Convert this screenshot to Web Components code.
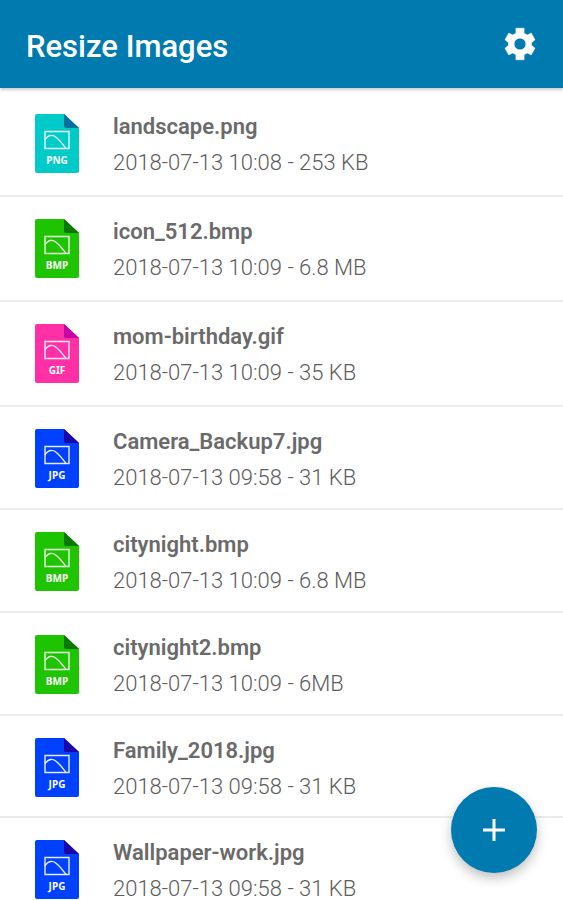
<!DOCTYPE html>
<html lang="en">
<head>
<meta charset="utf-8">
<meta name="viewport" content="width=device-width, initial-scale=1">
<title>Resize Images</title>
<style>
  html { background: #fff; scrollbar-width: none; }
  body { margin: 0; font-family: Roboto, "Liberation Sans", sans-serif; color: #666; }
</style>
</head>
<body>
<resize-app></resize-app>
<script>
const define = (name, render) => customElements.define(name, class extends HTMLElement {
  connectedCallback() {
    if (!this.shadowRoot) this.attachShadow({ mode: "open" }).innerHTML = render(this);
  }
});

define("app-bar", () => `
  <style>
    :host { display: block; position: sticky; top: 0; z-index: 1; background: #007aaf; color: #fff;
            box-shadow: 0 2px 3px rgba(0, 0, 0, .2); }
    header { display: flex; align-items: center; justify-content: space-between; min-height: 88px; padding: 0 24px 0 26px; }
    h1 { margin: 0; padding-top: 6px; font-size: 31px; line-height: 36px; font-weight: 500; }
  </style>
  <header><h1><slot></slot></h1><slot name="action"></slot></header>`);

define("settings-button", () => `
  <style>
    :host { display: block; }
    button { display: block; padding: 0; border: 0; background: none; color: inherit; cursor: pointer; }
    svg { display: block; width: 38px; height: 38px; fill: currentColor; stroke: currentColor; stroke-width: .3; }
  </style>
  <button type="button" aria-label="Settings">
    <svg viewBox="0 0 24 24" aria-hidden="true"><path d="M9.4 2H14.600V5.200L16.600 6.300L19.100 5.100L21.500 9.300L19.300 11.200V12.800L21.500 14.700L19.100 18.900L16.600 17.700L14.600 18.800V22H9.400V18.800L7.400 17.700L4.900 18.900L2.500 14.700L4.700 12.800V11.200L2.500 9.300L4.900 5.100L7.400 6.300L9.400 5.200ZM12 15.700C9.950 15.700 8.300 14.050 8.300 12S9.950 8.300 12 8.300S15.700 9.950 15.700 12S14.050 15.700 12 15.700Z" fill-rule="evenodd" stroke-linejoin="round"/></svg>
  </button>`);

define("file-icon", el => `
  <style>
    :host { display: block; --page: #0040ff; --fold: #1c08a8; }
    :host([type="PNG"]) { --page: #00cbc8; --fold: #00709f; }
    :host([type="BMP"]) { --page: #1fc400; --fold: #087800; }
    :host([type="GIF"]) { --page: #ff2fa6; --fold: #c500a5; }
    svg { display: block; width: 44px; height: 59px; }
    text { font: 700 10px "Noto Sans", sans-serif; fill: #fff; text-anchor: middle; }
  </style>
  <svg viewBox="0 0 44 59">
    <path d="M2 0H29L44 14V57Q44 59 42 59H2Q0 59 0 57V2Q0 0 2 0Z" fill="var(--page)"/>
    <path d="M29 0L44 14H31Q29 14 29 12Z" fill="var(--fold)"/>
    <g fill="none" stroke="#fff" stroke-opacity=".9" stroke-width="1.4">
      <path d="M10 17.5H34V34.500H10Z"/>
      <path d="M10 26C13 20.500 18 20 22 24C26 27.500 28 30.500 31 34.500"/>
    </g>
    <text x="22" y="50">${el.getAttribute("type")}</text>
  </svg>`);

define("file-row", el => `
  <style>
    :host { display: block; border-bottom: 2px solid #ececec; }
    article { display: flex; align-items: flex-start; gap: 34px; padding: 17px 24px 14px 35px; }
    :host([density="dense"]) article { padding-bottom: 12px; }
    :host([density="compact"]) article { padding-bottom: 11px; }
    file-icon { flex: none; padding-top: 5px; }
    div { flex: 1; min-width: 0; }
    h2, p { margin: 0; font-size: 22px; line-height: 36px; overflow-wrap: anywhere; }
    h2 { font-weight: 600; color: #6a6a6a; }
    p { font-weight: 300; color: #5c5c5c; }
  </style>
  <article>
    <file-icon type="${el.getAttribute("type")}"></file-icon>
    <div><h2><slot></slot></h2><p><slot name="info"></slot></p></div>
  </article>`);

define("add-button", () => `
  <style>
    :host { position: fixed; right: 26px; bottom: 27px; z-index: 2; }
    button { display: grid; place-items: center; width: 86px; height: 86px; padding: 0; border: 0; border-radius: 50%;
             background: #007aaf; color: #fff; box-shadow: 0 5px 12px rgba(0, 0, 0, .25); cursor: pointer; }
    svg { width: 22px; height: 22px; stroke: currentColor; stroke-width: 3; }
  </style>
  <button type="button" aria-label="Add images">
    <svg viewBox="0 0 22 22" aria-hidden="true"><path d="M11 0V22M0 11H22"/></svg>
  </button>`);

const files = [
  ["PNG", "landscape.png", "2018-07-13 10:08 - 253 KB"],
  ["BMP", "icon_512.bmp", "2018-07-13 10:09 - 6.8 MB"],
  ["GIF", "mom-birthday.gif", "2018-07-13 10:09 - 35 KB"],
  ["JPG", "Camera_Backup7.jpg", "2018-07-13 09:58 - 31 KB", "dense"],
  ["BMP", "citynight.bmp", "2018-07-13 10:09 - 6.8 MB", "dense"],
  ["BMP", "citynight2.bmp", "2018-07-13 10:09 - 6MB", "dense"],
  ["JPG", "Family_2018.jpg", "2018-07-13 09:58 - 31 KB", "compact"],
  ["JPG", "Wallpaper-work.jpg", "2018-07-13 09:58 - 31 KB", "compact"]
];

define("resize-app", () => `
  <style>
    :host { display: block; }
    ul { list-style: none; margin: 0; padding: 4px 0 0; }
  </style>
  <app-bar>Resize Images<settings-button slot="action"></settings-button></app-bar>
  <main><ul>${files.map(([type, name, info, density = "regular"]) =>
    `<li><file-row type="${type}" density="${density}">${name}<span slot="info">${info}</span></file-row></li>`).join("")}</ul></main>
  <add-button></add-button>`);
</script>
</body>
</html>
